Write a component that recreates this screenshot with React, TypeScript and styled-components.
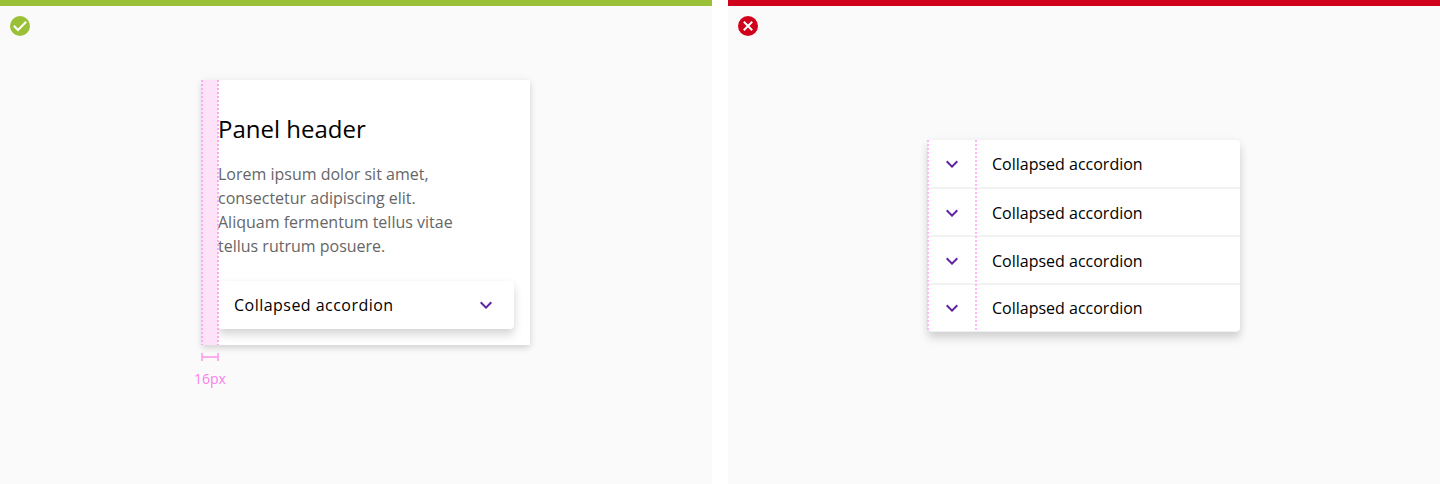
import React from "react";
import styled, { createGlobalStyle } from "styled-components";

const GlobalStyle = createGlobalStyle`
  * { box-sizing: border-box; }
  body { margin: 0; background: #fff; font-family: "Open Sans", sans-serif; color: #000; }
  h2, p { margin: 0; font-weight: 400; }
`;

const Comparison = styled.main`
  display: grid;
  grid-template-columns: 712px 712px;
  gap: 16px;
  height: 484px;
  overflow: hidden;
`;

const Example = styled.section<{ $tone: string }>`
  background: #fafafa;
  border-top: 6px solid ${(p) => p.$tone};
  padding: 10px;
`;

const StatusIcon = styled.svg`
  display: block;
  width: 20px;
  height: 20px;
`;

const Panel = styled.article`
  position: relative;
  width: 328px;
  height: 265px;
  margin: 44px 0 0 192px;
  padding: 31px 16px 16px;
  background: #fff;
  border-radius: 1px;
  box-shadow: 0 3px 6px rgba(0, 0, 0, 0.14), 0 0 12px rgba(0, 0, 0, 0.04);
`;

const PanelTitle = styled.h2`
  font-size: 24px;
  line-height: 36px;
`;

const PanelText = styled.p`
  width: 250px;
  margin-top: 15px;
  font-size: 16px;
  line-height: 24px;
  color: #666;
`;

const Accordion = styled.div`
  display: flex;
  align-items: center;
  justify-content: space-between;
  height: 48px;
  margin-top: 23px;
  padding: 0 16px;
  background: #fff;
  border-radius: 4px;
  font-size: 16px;
  letter-spacing: 0.47px;
  box-shadow: 0 6px 10px rgba(0, 0, 0, 0.15), 0 1px 10px rgba(0, 0, 0, 0.03);
`;

const Arrow = styled.svg`
  display: block;
  flex: none;
  width: 24px;
  height: 24px;
  fill: #5f249f;
`;

const DottedGuide = styled.span<{ $left: number; $height: number; $color: string }>`
  position: absolute;
  top: 0;
  left: ${(p) => p.$left}px;
  width: 2px;
  height: ${(p) => p.$height}px;
  background: repeating-linear-gradient(${(p) => p.$color} 0 2px, transparent 2px 4px);
`;

const Inset = styled.span`
  position: absolute;
  top: 0;
  left: 0;
  width: 16px;
  height: 100%;
  background: #fde2f8;
`;

const Measure = styled.div`
  display: flex;
  flex-direction: column;
  align-items: center;
  width: 36px;
  margin: 8px 0 0 182px;
  font-size: 14px;
  line-height: 20px;
  color: #fb7eea;
`;

const Bracket = styled.svg`
  display: block;
  width: 18px;
  height: 8px;
  margin-bottom: 8px;
`;

const List = styled.div`
  position: relative;
  width: 312px;
  height: 192px;
  margin: 104px 0 0 190px;
  background: #f2f2f2;
  border-radius: 4px;
  box-shadow: 0 6px 10px rgba(0, 0, 0, 0.15), 0 1px 10px rgba(0, 0, 0, 0.05);
`;

const Rows = styled.div`
  display: grid;
  grid-template-rows: 47px 46px 46px 46px;
  gap: 2px;
  border-radius: 4px;
  overflow: hidden;
`;

const Row = styled.div`
  display: flex;
  align-items: center;
  gap: 28px;
  padding: 2px 12px 0;
  background: #fff;
  font-size: 16px;

  &:first-child { padding: 0 12px 0; align-items: flex-start; padding-top: 12px; line-height: 24px; }
  &:last-child { padding-top: 0; }
`;

const Chevron = () => (
  <Arrow viewBox="0 0 24 24">
    <path d="M7.41 8.59 12 13.17l4.59-4.58L18 10l-6 6-6-6z" />
  </Arrow>
);

export default function App() {
  return (
    <>
      <GlobalStyle />
      <Comparison>
        <Example $tone="#99c036">
          <StatusIcon viewBox="0 0 20 20">
            <circle cx="10" cy="10" r="10" fill="#99c036" />
            <path d="m3.8 9.8 4.2 4.2 8.2-8.2" fill="none" stroke="#fff" strokeWidth="2" />
          </StatusIcon>
          <Panel>
            <Inset />
            <DottedGuide $left={-1} $height={265} $color="#f9abec" />
            <DottedGuide $left={15} $height={265} $color="#f9abec" />
            <PanelTitle>Panel header</PanelTitle>
            <PanelText>
              Lorem ipsum dolor sit amet,<br />consectetur adipiscing elit.<br />
              Aliquam fermentum tellus vitae<br />tellus rutrum posuere.
            </PanelText>
            <Accordion>
              Collapsed accordion
              <Chevron />
            </Accordion>
          </Panel>
          <Measure>
            <Bracket viewBox="0 0 18 8">
              <path d="M1 0v8M17 0v8M1 4h16" fill="none" stroke="#fdabf0" strokeWidth="2" />
            </Bracket>
            16px
          </Measure>
        </Example>
        <Example $tone="#d0021b">
          <StatusIcon viewBox="0 0 20 20">
            <circle cx="10" cy="10" r="10" fill="#d0021b" />
            <path d="m5.8 5.8 8.4 8.4m0-8.4-8.4 8.4" fill="none" stroke="#fff" strokeWidth="2" />
          </StatusIcon>
          <List>
            <Rows>
              {[1, 2, 3, 4].map((n) => (
                <Row key={n}>
                  <Chevron />
                  Collapsed accordion
                </Row>
              ))}
            </Rows>
            <DottedGuide $left={-1} $height={190} $color="#ffb8f3" />
            <DottedGuide $left={47} $height={190} $color="#ffb8f3" />
          </List>
        </Example>
      </Comparison>
    </>
  );
}
